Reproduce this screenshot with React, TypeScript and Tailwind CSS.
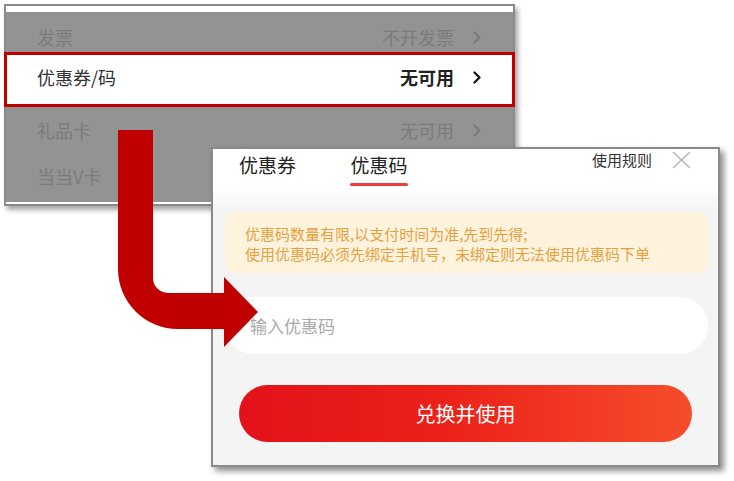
const FONT = { fontFamily: '"Noto Sans CJK SC", "Noto Sans", sans-serif' };

function Chevron({ className }: { className: string }) {
  return (
    <svg width="8" height="13" viewBox="0 0 8 13" className={className}>
      <polyline points="1.5,1.5 6.5,6.5 1.5,11.5" fill="none" stroke="currentColor" strokeWidth="2.2" strokeLinecap="round" strokeLinejoin="round" />
    </svg>
  );
}

function MutedRow({ label, value, className }: { label: string; value?: string; className: string }) {
  return (
    <div className={`flex items-center pl-[31px] pr-[32px] text-[18px] text-[#7b7b7b] ${className}`}>
      <span className="flex-1">{label}</span>
      {value && (
        <>
          <span>{value}</span>
          <Chevron className="ml-[19px] text-[#7b7b7b]" />
        </>
      )}
    </div>
  );
}

function OrderPanel() {
  return (
    <div className="absolute left-[4px] top-[4px] flex h-[202px] w-[511px] flex-col border-2 border-[#8a8a8a] bg-[#939393] shadow-[3px_4px_5px_rgba(0,0,0,0.35)]">
      <div className="h-[6px] bg-white" />
      <MutedRow label="发票" value="不开发票" className="h-[40px] pt-[10px]" />
      <div className="relative z-10 -mx-[2px] flex h-[55px] items-center border-[3px] border-[#c00000] bg-white pb-[5px] pl-[30px] pr-[31px] text-[18px]">
        <span className="flex-1 text-[#333]">优惠券/码</span>
        <span className="font-bold text-[#222]">无可用</span>
        <Chevron className="ml-[19px] text-[#111]" />
      </div>
      <MutedRow label="礼品卡" value="无可用" className="h-[46px]" />
      <MutedRow label="当当V卡" className="h-[46px]" />
      <div className="mt-auto h-[2px] bg-white" />
    </div>
  );
}

function CouponPopup() {
  return (
    <div className="absolute left-[211px] top-[147px] flex h-[320px] w-[509px] flex-col border-2 border-[#8a8a8a] bg-[linear-gradient(#ffffff_0,#ffffff_38px,#f4f4f4_62px)] shadow-[4px_4px_6px_rgba(0,0,0,0.45)]">
      <div className="flex h-[40px] items-start justify-between pl-[26px] pr-[27px]">
        <div className="flex gap-[54px] pt-[4px] text-[19px] leading-[24px] text-[#222]">
          <span>优惠券</span>
          <div className="flex flex-col items-center">
            <span>优惠码</span>
            <div className="mt-[6px] h-[3px] w-[58px] rounded-full bg-[#ef3b3b]" />
          </div>
        </div>
        <div className="flex items-start gap-[20px] pt-[1px]">
          <span className="text-[15px] leading-[20px] text-[#333]">使用规则</span>
          <svg width="19" height="18" viewBox="0 0 19 18" className="mt-[1px]">
            <path d="M1 1 L18 17 M18 1 L1 17" stroke="#b5b5b5" strokeWidth="1.4" fill="none" />
          </svg>
        </div>
      </div>
      <div className="ml-[12px] mr-[10px] mt-[23px] rounded-[10px] bg-[#fff3dd] pb-[9px] pl-[20px] pt-[12px] text-[15px] leading-[20px] text-[#e5a13f]">
        <p>优惠码数量有限,以支付时间为准,先到先得;</p>
        <p>使用优惠码必须先绑定手机号，未绑定则无法使用优惠码下单</p>
      </div>
      <div className="ml-[12px] mr-[10px] mt-[24px] flex h-[57px] items-center rounded-full bg-white pl-[25px] text-[17px] text-[#a9a9a9]">
        输入优惠码
      </div>
      <button
        type="button"
        className="mx-[26px] mt-[31px] flex h-[57px] items-center justify-center rounded-full bg-[linear-gradient(90deg,#e3121a_0%,#ec2119_45%,#f64d2b_100%)] text-[20px] text-white"
      >
        兑换并使用
      </button>
    </div>
  );
}

function Arrow() {
  return (
    <svg width="734" height="481" viewBox="0 0 734 481" className="pointer-events-none absolute left-0 top-0">
      <path
        d="M118 130 L118 269 A60 60 0 0 0 178 329 L224 329 L224 347 L258 312 L224 277 L224 293 L168 293 A15 15 0 0 1 153 278 L153 130 Z"
        fill="#c00000"
      />
    </svg>
  );
}

export default function App() {
  return (
    <div className="relative h-[481px] w-[734px] overflow-hidden bg-white" style={FONT}>
      <OrderPanel />
      <CouponPopup />
      <Arrow />
    </div>
  );
}
